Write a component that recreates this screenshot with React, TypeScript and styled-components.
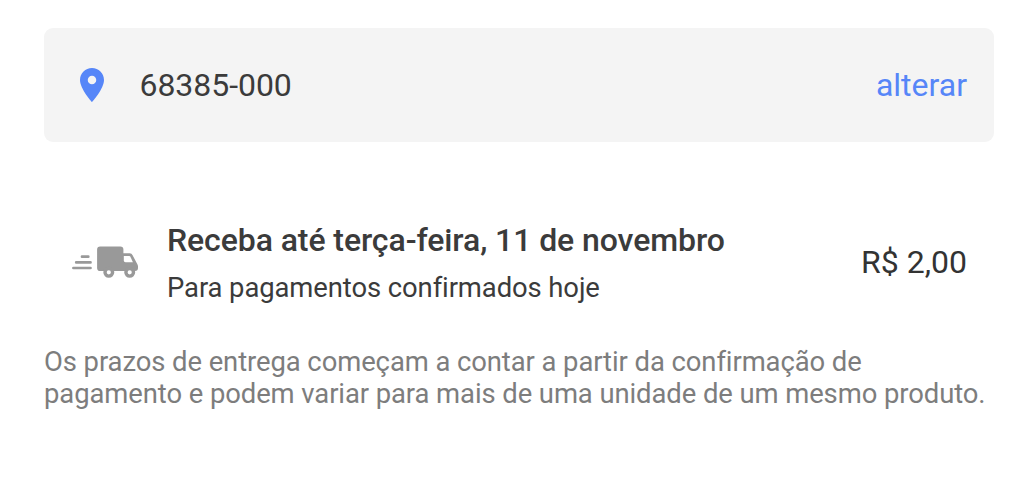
import React from 'react'
import styled, { createGlobalStyle } from 'styled-components'

const GlobalStyle = createGlobalStyle`
  * {
    box-sizing: border-box;
  }

  body {
    margin: 0;
    background: #fff;
    color: #3b3b3b;
    font-family: Roboto, 'Liberation Sans', sans-serif;
  }
`

function PinIcon() {
  return (
    <svg width="24" height="34" viewBox="0 0 24 34" fill="#5686f8">
      <path
        fillRule="evenodd"
        d="M12 0C5.4 0 0 5.3 0 11.9 0 20.8 12 34 12 34s12-13.2 12-22.1C24 5.3 18.6 0 12 0Zm0 7.7a4.25 4.25 0 1 1 0 8.5 4.25 4.25 0 0 1 0-8.5Z"
      />
    </svg>
  )
}

function TruckIcon() {
  return (
    <svg width="67" height="34" viewBox="0 0 67 34">
      <g stroke="#999" strokeWidth="2.7" strokeLinecap="round">
        <path d="M10 10.7h6.3M4.2 16.4h14.3M1.4 22h17.1" />
      </g>
      <path
        fill="#999"
        d="M28.2.4h20.1a3.1 3.1 0 0 1 3.1 3.1v3.8h6.3a3.2 3.2 0 0 1 2.9 1.9l4.9 9.3c.3.6.5 1.2.5 1.9v1.6a3 3 0 0 1-3 3H28.2a3.1 3.1 0 0 1-3.1-3.1V3.5A3.1 3.1 0 0 1 28.2.4Z"
      />
      <path fill="#fff" d="M51.8 10.1h5.5c.5 0 .9.3 1.1.7l2.5 5.5h-7.4a1.7 1.7 0 0 1-1.7-1.7Z" />
      <g fill="#fff" stroke="#999" strokeWidth="3.4">
        <circle cx="36.8" cy="26.3" r="3.8" />
        <circle cx="57.7" cy="26.3" r="3.8" />
      </g>
    </svg>
  )
}

function App() {
  return (
    <Main>
      <GlobalStyle />
      <ZipBar>
        <PinIcon />
        <ZipCode>68385-000</ZipCode>
        <ChangeButton type="button">alterar</ChangeButton>
      </ZipBar>
      <Option>
        <TruckIcon />
        <Details>
          <Title>Receba até terça-feira, 11 de novembro</Title>
          <Subtitle>Para pagamentos confirmados hoje</Subtitle>
        </Details>
        <Price>R$ 2,00</Price>
      </Option>
      <Note>
        Os prazos de entrega começam a contar a partir da confirmação de pagamento e podem variar para mais de uma
        unidade de um mesmo produto.
      </Note>
    </Main>
  )
}

export default App

const Main = styled.main`
  height: 500px;
  padding: 28px 21px 0 44px;
`

const ZipBar = styled.section`
  display: flex;
  align-items: center;
  height: 114px;
  padding: 0 27px 0 36px;
  border-radius: 9px;
  background: #f4f4f4;
`

const ZipCode = styled.span`
  margin-left: 35.5px;
  font-size: 32px;
  letter-spacing: -0.05px;
  line-height: 38px;
`

const ChangeButton = styled.button`
  margin-left: auto;
  padding: 0;
  border: 0;
  background: none;
  color: #5686f8;
  font-family: inherit;
  font-size: 32px;
  line-height: 38px;
`

const Option = styled.section`
  display: flex;
  align-items: center;
  height: 82px;
  margin-top: 80px;
  padding: 0 27px 0 28px;
`

const Details = styled.div`
  margin-left: 28px;
`

const Title = styled.h2`
  margin: 0;
  font-size: 32px;
  font-weight: 500;
  letter-spacing: -0.09px;
  line-height: 37px;
`

const Subtitle = styled.p`
  margin: 13px 0 0;
  font-size: 27.43px;
  font-variant-ligatures: common-ligatures;
  letter-spacing: -0.09px;
  line-height: 32px;
`

const Price = styled.span`
  margin-left: auto;
  padding-bottom: 2px;
  color: #333;
  font-size: 32px;
  line-height: 38px;
`

const Note = styled.p`
  margin: 42px 0 0;
  color: #7d7d7d;
  font-size: 27.43px;
  letter-spacing: -0.08px;
  line-height: 32px;
`
